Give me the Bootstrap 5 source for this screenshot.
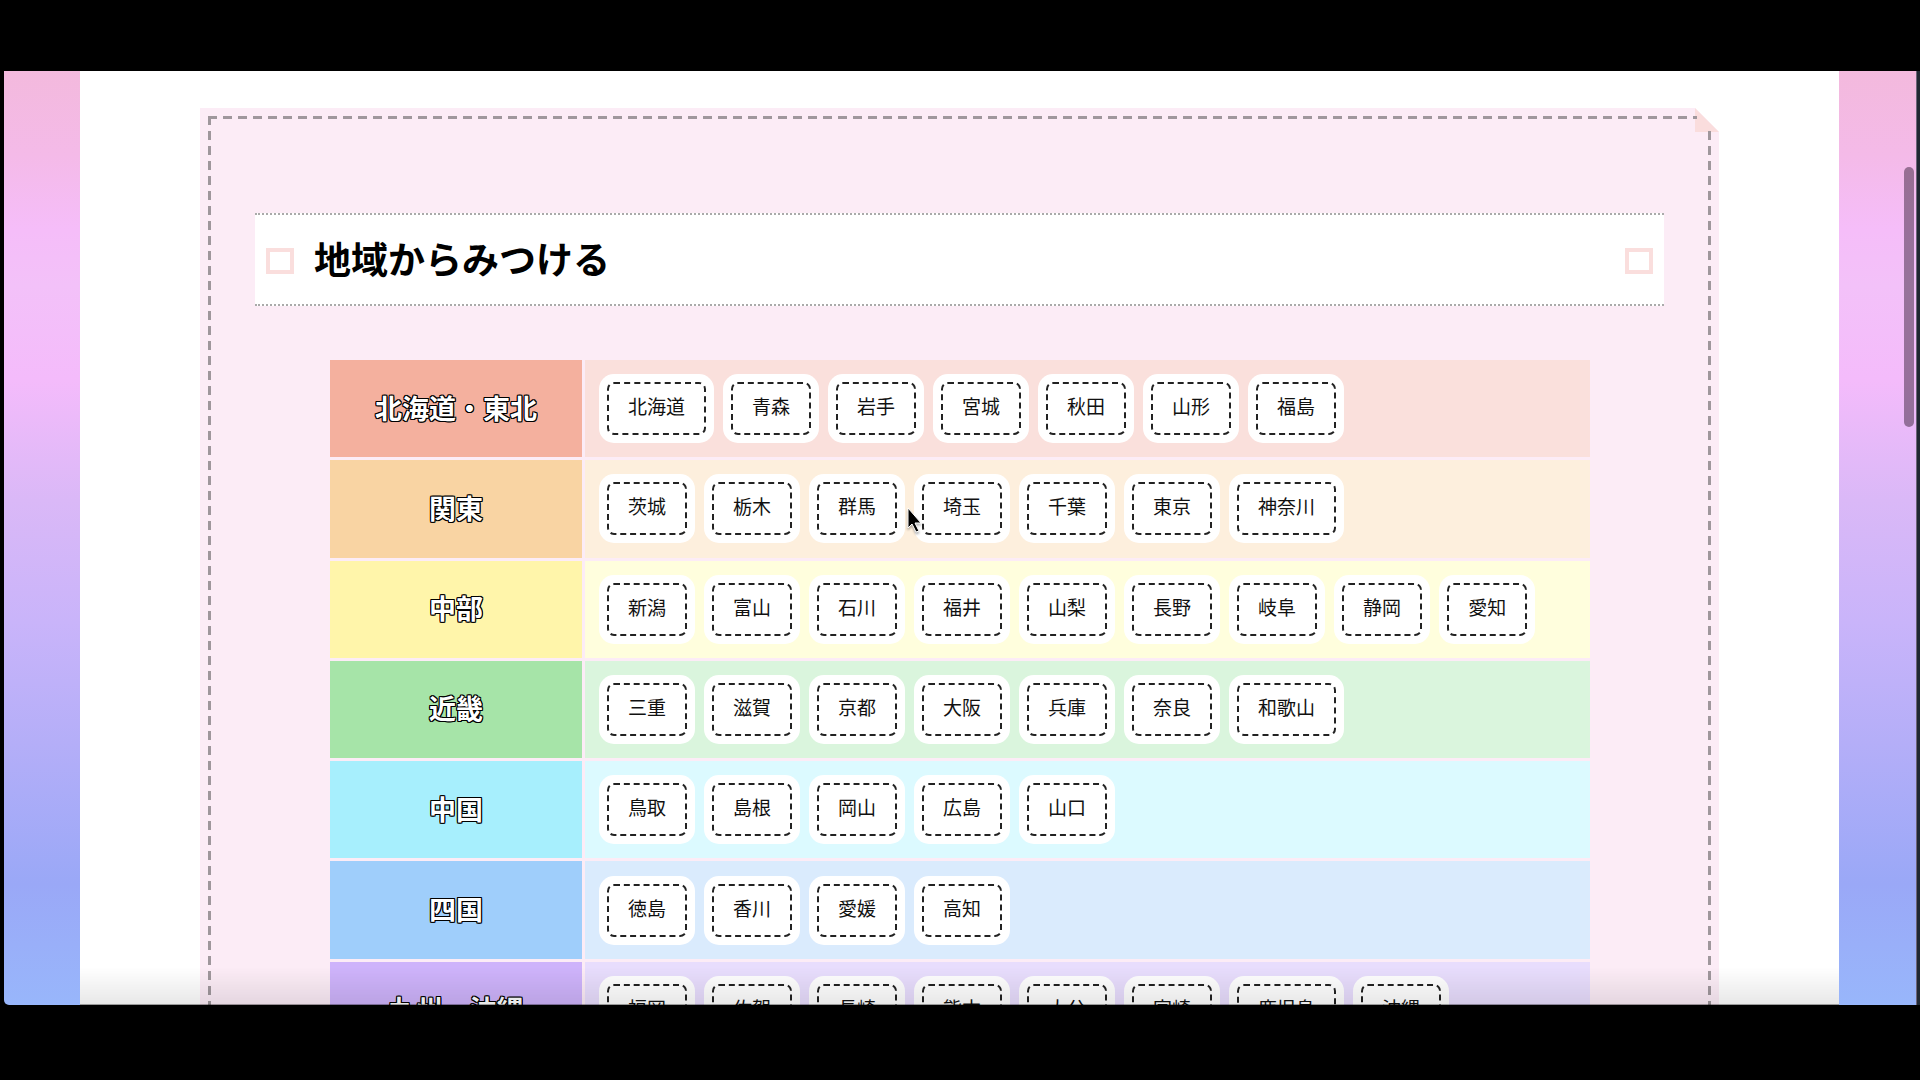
<!DOCTYPE html>
<html lang="ja">
<head>
<meta charset="utf-8">
<meta name="viewport" content="width=device-width, initial-scale=1">
<title>地域からみつける</title>
<link href="https://cdn.jsdelivr.net/npm/bootstrap@5.3.0/dist/css/bootstrap.min.css" rel="stylesheet">
<style>
  body { background: #000; font-family: "Noto Sans CJK JP", sans-serif; color: #000; }
  .stage { height: 100vh; padding: 71px 0 75px 4px; }
  .window-edge { width: 4px; background: #202832; border-left: 1px solid #6d6478; }
  .browser { border-radius: 0 0 0 5px; padding: 0 77px 0 76px; background: linear-gradient(180deg, #f3b9dd 0, #f4bae8 9%, #f5bdf9 17%, #f3c1f9 23%, #f4bbfb 33%, #dab8f7 46%, #c9b4fa 59%, #b4aef8 72%, #9aa8f7 87%, #98b6fb 100%); }
  .paper { background: #fff; padding: 37px 120px 0; min-height: 100%; }
  .sheet {
    --dash: #9f979c;
    background: #fcecf6; height: 1200px; padding: 105px 55px 0;
    clip-path: polygon(0 0, calc(100% - 24px) 0, 100% 24px, 100% 100%, 0 100%);
  }
  .stitch {
    inset: 8px;
    background:
      repeating-linear-gradient(90deg, var(--dash) 0 9px, transparent 9px 15px) 0 0 / calc(100% - 14px) 3px no-repeat,
      repeating-linear-gradient(180deg, var(--dash) 0 9px, transparent 9px 15px) 0 0 / 3px 100% no-repeat,
      repeating-linear-gradient(180deg, var(--dash) 0 9px, transparent 9px 15px) 100% 15px / 3px 100% no-repeat;
  }
  .fold { top: 0; right: 0; width: 24px; height: 24px; background: #fadddd; }
  .region-title { height: 93px; padding: 2px 11px 0; background: #fff; border-top: 2px dotted #aaa; border-bottom: 2px dotted #aaa; }
  .region-title h2 { padding-bottom: 5px; font-size: 37px; line-height: 48px; }
  .title-box { width: 28px; height: 26px; border: 4px solid #fadedd; }
  .region-area { padding: 51px 71px 0 72px; }
  .region-table { width: 100%; height: 705px; border-collapse: separate; border-spacing: 3px; }
  .region-table th { width: 252px; padding-bottom: 3px; text-align: center; font-size: 27px; line-height: 40px; color: #fff;
    text-shadow: 1px 0 #000, -1px 0 #000, 0 1px #000, 0 -1px #000, 1px 1px #000, -1px 1px #000, 1px -1px #000, -1px -1px #000; }
  .region-table td { padding: 0 22px; }
  .pref-list { gap: 25px; }
  .pref { display: block; padding: 10px 19px 15px; border: 2px dashed #222; border-radius: 7px; background: #fff; box-shadow: 0 0 0 8px #fff; color: #111; font-size: 19px; line-height: 24px; text-decoration: none; white-space: nowrap; }
  .tohoku th { background: #f4b09e; } .tohoku td { background: #fae0dc; }
  .kanto th { background: #f9d4a3; } .kanto td { background: #fdefdd; }
  .chubu th { background: #fff5aa; } .chubu td { background: #fffedd; }
  .kinki th { background: #a6e4a8; } .kinki td { background: #daf5dd; }
  .chugoku th { background: #a7effd; } .chugoku td { background: #dcfaff; }
  .shikoku th { background: #9fcefb; } .shikoku td { background: #daebfd; }
  .kyushu th { background: #ceb3fb; } .kyushu td { background: #e8ddfd; }
  .bottom-shade { left: 76px; right: 77px; bottom: 0; height: 38px; background: linear-gradient(180deg, transparent, rgba(0,0,0,.09)); border-bottom: 1px solid rgba(0,0,0,.4); }
  .scroll-thumb { top: 96px; right: 2px; width: 10px; height: 260px; border-radius: 5px; background: rgba(50,30,50,.48); }
  .pointer { left: 903px; top: 435px; filter: drop-shadow(0 2px 1px rgba(0,0,0,.3)); }
</style>
<script src="https://cdn.jsdelivr.net/npm/bootstrap@5.3.0/dist/js/bootstrap.bundle.min.js"></script>
</head>
<body class="overflow-hidden">
<div class="stage d-flex">
  <div class="browser position-relative flex-grow-1 overflow-hidden">
    <main class="paper">
      <section class="sheet position-relative">
        <div class="fold position-absolute"></div>
        <div class="stitch position-absolute"></div>
        <div class="position-relative">
          <div class="region-title d-flex align-items-center">
            <span class="title-box"></span>
            <h2 class="fw-bold m-0 ms-3 ps-1 flex-grow-1">地域からみつける</h2>
            <span class="title-box"></span>
          </div>
          <div class="region-area">
            <table class="region-table">
              <tbody>
              <tr class="tohoku"><th scope="row">北海道・東北</th><td><div class="pref-list d-flex"><a class="pref" href="#">北海道</a><a class="pref" href="#">青森</a><a class="pref" href="#">岩手</a><a class="pref" href="#">宮城</a><a class="pref" href="#">秋田</a><a class="pref" href="#">山形</a><a class="pref" href="#">福島</a></div></td></tr>
              <tr class="kanto"><th scope="row">関東</th><td><div class="pref-list d-flex"><a class="pref" href="#">茨城</a><a class="pref" href="#">栃木</a><a class="pref" href="#">群馬</a><a class="pref" href="#">埼玉</a><a class="pref" href="#">千葉</a><a class="pref" href="#">東京</a><a class="pref" href="#">神奈川</a></div></td></tr>
              <tr class="chubu"><th scope="row">中部</th><td><div class="pref-list d-flex"><a class="pref" href="#">新潟</a><a class="pref" href="#">富山</a><a class="pref" href="#">石川</a><a class="pref" href="#">福井</a><a class="pref" href="#">山梨</a><a class="pref" href="#">長野</a><a class="pref" href="#">岐阜</a><a class="pref" href="#">静岡</a><a class="pref" href="#">愛知</a></div></td></tr>
              <tr class="kinki"><th scope="row">近畿</th><td><div class="pref-list d-flex"><a class="pref" href="#">三重</a><a class="pref" href="#">滋賀</a><a class="pref" href="#">京都</a><a class="pref" href="#">大阪</a><a class="pref" href="#">兵庫</a><a class="pref" href="#">奈良</a><a class="pref" href="#">和歌山</a></div></td></tr>
              <tr class="chugoku"><th scope="row">中国</th><td><div class="pref-list d-flex"><a class="pref" href="#">鳥取</a><a class="pref" href="#">島根</a><a class="pref" href="#">岡山</a><a class="pref" href="#">広島</a><a class="pref" href="#">山口</a></div></td></tr>
              <tr class="shikoku"><th scope="row">四国</th><td><div class="pref-list d-flex"><a class="pref" href="#">徳島</a><a class="pref" href="#">香川</a><a class="pref" href="#">愛媛</a><a class="pref" href="#">高知</a></div></td></tr>
              <tr class="kyushu"><th scope="row">九州・沖縄</th><td><div class="pref-list d-flex"><a class="pref" href="#">福岡</a><a class="pref" href="#">佐賀</a><a class="pref" href="#">長崎</a><a class="pref" href="#">熊本</a><a class="pref" href="#">大分</a><a class="pref" href="#">宮崎</a><a class="pref" href="#">鹿児島</a><a class="pref" href="#">沖縄</a></div></td></tr>
              </tbody>
            </table>
          </div>
        </div>
      </section>
    </main>
    <div class="bottom-shade position-absolute"></div>
    <div class="scroll-thumb position-absolute"></div>
    <svg class="pointer position-absolute" width="16" height="28" viewBox="0 0 16 28"><path d="M1 2v20l4-4 4 8 3-1-4-8h6z" fill="#000" stroke="#fff" stroke-width="1"/></svg>
  </div>
  <div class="window-edge"></div>
</div>
</body>
</html>
